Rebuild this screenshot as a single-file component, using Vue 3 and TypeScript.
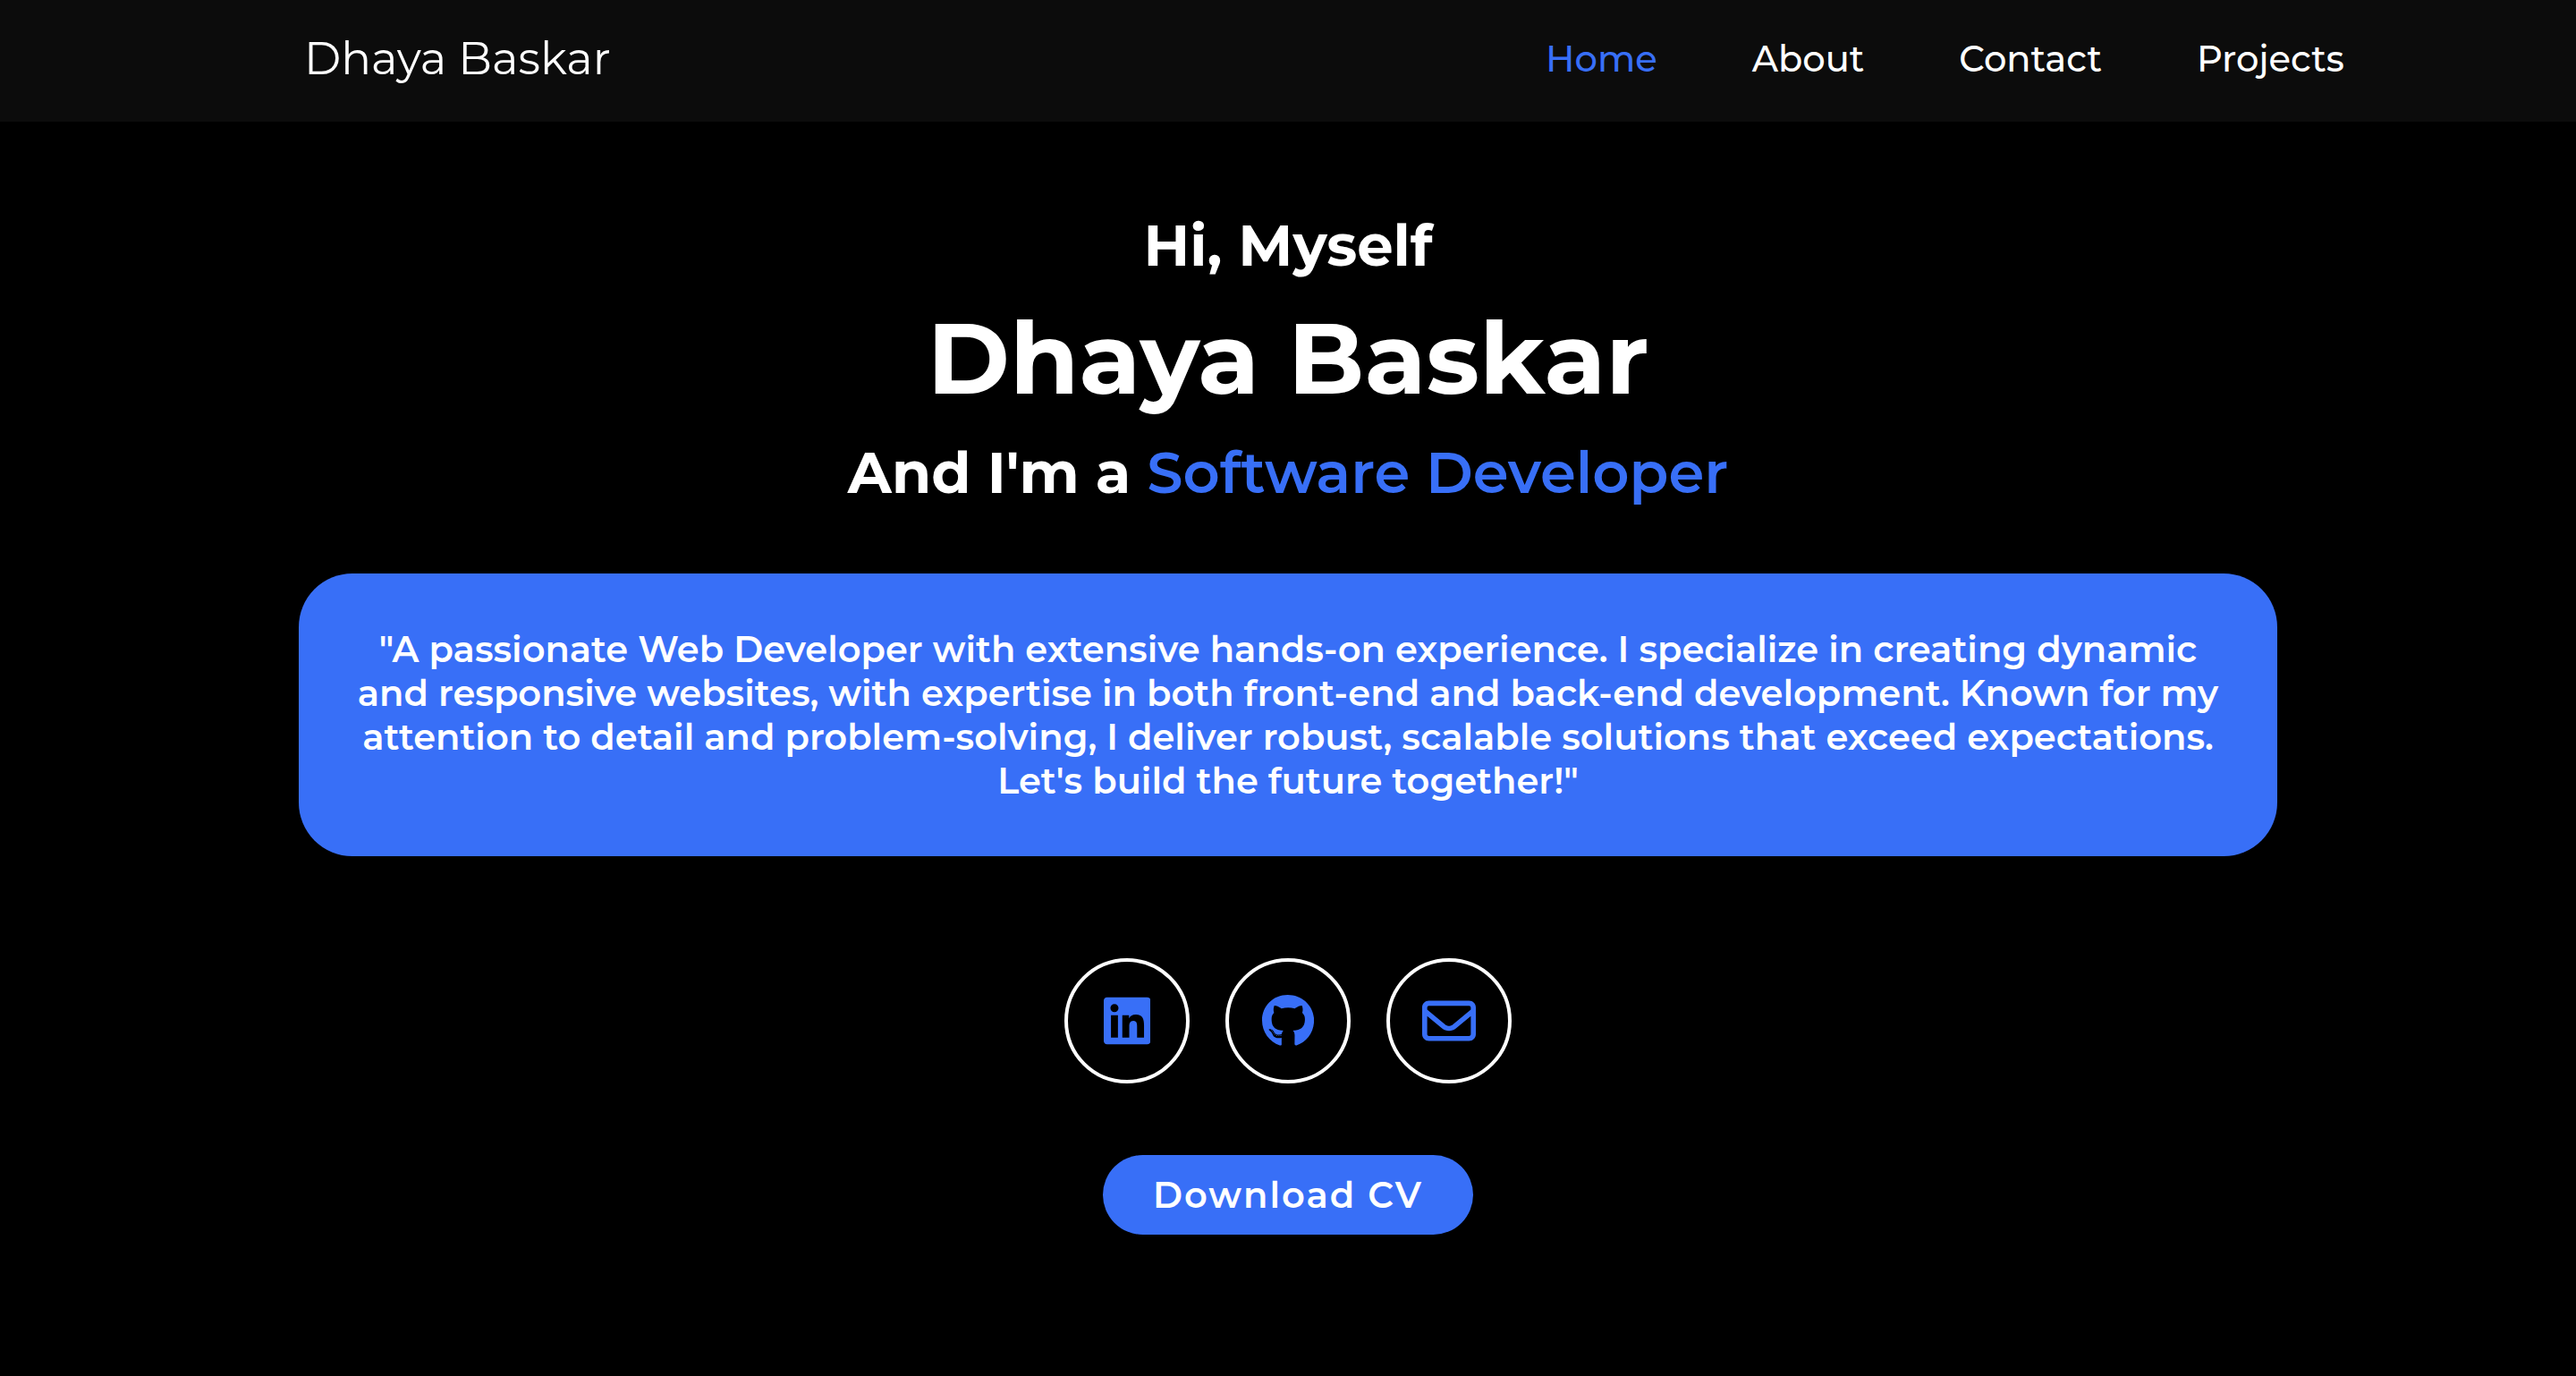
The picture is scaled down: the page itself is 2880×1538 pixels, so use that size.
<script setup lang="ts">
import { ref } from 'vue'

interface NavItem {
  label: string
  href: string
}

const navItems: NavItem[] = [
  { label: 'Home', href: '#home' },
  { label: 'About', href: '#about' },
  { label: 'Contact', href: '#contact' },
  { label: 'Projects', href: '#projects' },
]

const active = ref('Home')
</script>

<template>
  <div class="page">
    <header class="header">
      <a class="logo" href="#home">Dhaya Baskar</a>
      <nav class="nav" aria-label="Main">
        <a
          v-for="item in navItems"
          :key="item.label"
          :href="item.href"
          :class="{ active: item.label === active }"
          @click="active = item.label"
        >{{ item.label }}</a>
      </nav>
    </header>

    <main id="home" class="hero">
      <h3 class="line">Hi, Myself</h3>
      <h1 class="name">Dhaya Baskar</h1>
      <h3 class="line">And I'm a <span class="role">Software Developer</span></h3>

      <p class="bio">
        "A passionate Web Developer with extensive hands-on experience. I specialize in creating dynamic
        and responsive websites, with expertise in both front-end and back-end development. Known for my
        attention to detail and problem-solving, I deliver robust, scalable solutions that exceed expectations.
        Let's build the future together!"
      </p>

      <div class="social">
        <a href="#linkedin" aria-label="LinkedIn">
          <svg viewBox="0 0 448 512" aria-hidden="true"><path d="M416 32H31.900C14.300 32 0 46.500 0 64.300v383.400C0 465.500 14.300 480 31.900 480H416c17.600 0 32-14.500 32-32.300V64.300c0-17.800-14.400-32.300-32-32.300zM135.400 416H69V202.200h66.500V416zm-33.200-243c-21.300 0-38.500-17.300-38.500-38.500S80.900 96 102.200 96c21.200 0 38.500 17.300 38.500 38.500 0 21.300-17.200 38.500-38.500 38.500zm282.100 243h-66.400V312c0-24.800-.5-56.700-34.500-56.700-34.600 0-39.900 27-39.900 54.900V416h-66.400V202.200h63.700v29.200h.9c8.900-16.800 30.600-34.500 62.900-34.500 67.200 0 79.700 44.300 79.700 101.900V416z" /></svg>
        </a>
        <a href="#github" aria-label="GitHub">
          <svg viewBox="0 0 496 512" aria-hidden="true"><path d="M165.900 397.400c0 2-2.300 3.600-5.200 3.600-3.300.3-5.600-1.300-5.600-3.600 0-2 2.300-3.600 5.200-3.600 3-.3 5.600 1.300 5.600 3.600zm-31.100-4.500c-.7 2 1.300 4.300 4.300 4.900 2.600 1 5.600 0 6.200-2s-1.300-4.300-4.300-5.200c-2.600-.7-5.500.3-6.200 2.300zm44.200-1.700c-2.900.7-4.900 2.600-4.600 4.900.3 2 2.900 3.300 5.900 2.600 2.900-.7 4.900-2.600 4.600-4.600-.3-1.900-3-3.200-5.900-2.900zM244.800 8C106.100 8 0 113.300 0 252c0 110.900 69.800 205.800 169.500 239.200 12.800 2.300 17.300-5.600 17.300-12.100 0-6.200-.3-40.400-.3-61.400 0 0-70 15-84.700-29.800 0 0-11.400-29.100-27.800-36.600 0 0-22.900-15.700 1.600-15.400 0 0 24.900 2 38.600 25.800 21.900 38.600 58.600 27.500 72.900 20.900 2.300-16 8.800-27.100 16-33.700-55.900-6.200-112.300-14.300-112.300-110.500 0-27.500 7.600-41.300 23.600-58.900-2.600-6.500-11.100-33.300 2.600-67.900 20.900-6.500 69 27 69 27 20-5.600 41.500-8.500 62.800-8.500s42.800 2.900 62.800 8.500c0 0 48.100-33.600 69-27 13.700 34.700 5.200 61.400 2.600 67.900 16 17.700 25.800 31.500 25.800 58.900 0 96.500-58.900 104.200-114.800 110.500 9.200 7.900 17 22.900 17 46.400 0 33.700-.3 75.400-.3 83.600 0 6.500 4.600 14.400 17.300 12.100C428.200 457.800 496 362.900 496 252 496 113.300 383.500 8 244.800 8zM97.200 352.900c-1.300 1-1 3.300.7 5.200 1.600 1.600 3.900 2.300 5.200 1 1.300-1 1-3.300-.7-5.200-1.600-1.600-3.900-2.300-5.200-1zm-10.800-8.100c-.7 1.300.3 2.900 2.300 3.900 1.600 1 3.600.7 4.300-.7.7-1.300-.3-2.900-2.300-3.900-2-.6-3.600-.3-4.300.7zm32.400 35.600c-1.600 1.300-1 4.300 1.300 6.200 2.300 2.300 5.200 2.600 6.500 1 1.300-1.300.7-4.300-1.300-6.200-2.200-2.300-5.200-2.600-6.500-1zm-11.400-14.700c-1.600 1-1.600 3.600 0 5.900 1.600 2.300 4.300 3.300 5.600 2.300 1.600-1.300 1.600-3.900 0-6.200-1.400-2.300-4-3.300-5.600-2z" /></svg>
        </a>
        <a href="#email" aria-label="Email">
          <svg viewBox="0 0 512 512" aria-hidden="true"><path d="M64 112c-8.800 0-16 7.200-16 16v22.100L220.500 291.700c20.700 17 50.400 17 71.100 0L464 150.100V128c0-8.800-7.200-16-16-16H64zM48 212.200V384c0 8.800 7.200 16 16 16H448c8.800 0 16-7.200 16-16V212.200L322 328.800c-38.400 31.500-93.700 31.500-132 0L48 212.200zM0 128C0 92.700 28.700 64 64 64H448c35.300 0 64 28.700 64 64V384c0 35.300-28.700 64-64 64H64c-35.300 0-64-28.700-64-64V128z" /></svg>
        </a>
      </div>

      <button class="download" type="button">Download CV</button>
    </main>
  </div>
</template>

<style>
body {
  margin: 0;
  background: #000;
}
</style>

<style scoped>
.page {
  min-height: 100vh;
  box-sizing: border-box;
  background: #000;
  color: #fff;
  font-family: Montserrat, Inter, sans-serif;
}

.header {
  display: flex;
  align-items: center;
  justify-content: space-between;
  padding: 34px 9% 38px 340px;
  background: #0c0c0c;
}

.header a {
  color: #fff;
  text-decoration: none;
}

.logo {
  font-size: 50px;
  line-height: 64px;
}

.nav {
  display: flex;
  gap: 106px;
  font-size: 40px;
  font-weight: 500;
  line-height: 48px;
}

.header .nav a.active {
  color: #386ff7;
}

.hero {
  display: flex;
  flex-direction: column;
  align-items: center;
  padding: 98px 334px 0;
  text-align: center;
}

.line {
  margin: 0;
  font-size: 64px;
  font-weight: 700;
  line-height: 80px;
}

.role {
  color: #386ff7;
  font-weight: 600;
}

.name {
  margin: 18px 0 20px;
  font-size: 112px;
  font-weight: 700;
  line-height: 136px;
}

.bio {
  align-self: stretch;
  margin: 73px 0 0;
  padding: 60px;
  border-radius: 60px;
  background: #386ff7;
  font-size: 40px;
  font-weight: 600;
  line-height: 49px;
}

.social {
  display: flex;
  gap: 40px;
  margin: 114px 0 80px;
}

.social a {
  display: flex;
  align-items: center;
  justify-content: center;
  width: 140px;
  height: 140px;
  box-sizing: border-box;
  border: 4px solid #fff;
  border-radius: 50%;
  color: #386ff7;
}

.social svg {
  height: 60px;
  fill: currentColor;
}

.download {
  padding: 20px 56px;
  border: 0;
  border-radius: 48px;
  background: #386ff7;
  color: #fff;
  font-family: inherit;
  font-size: 40px;
  font-weight: 600;
  line-height: 49px;
  letter-spacing: 2px;
  cursor: pointer;
}
</style>
